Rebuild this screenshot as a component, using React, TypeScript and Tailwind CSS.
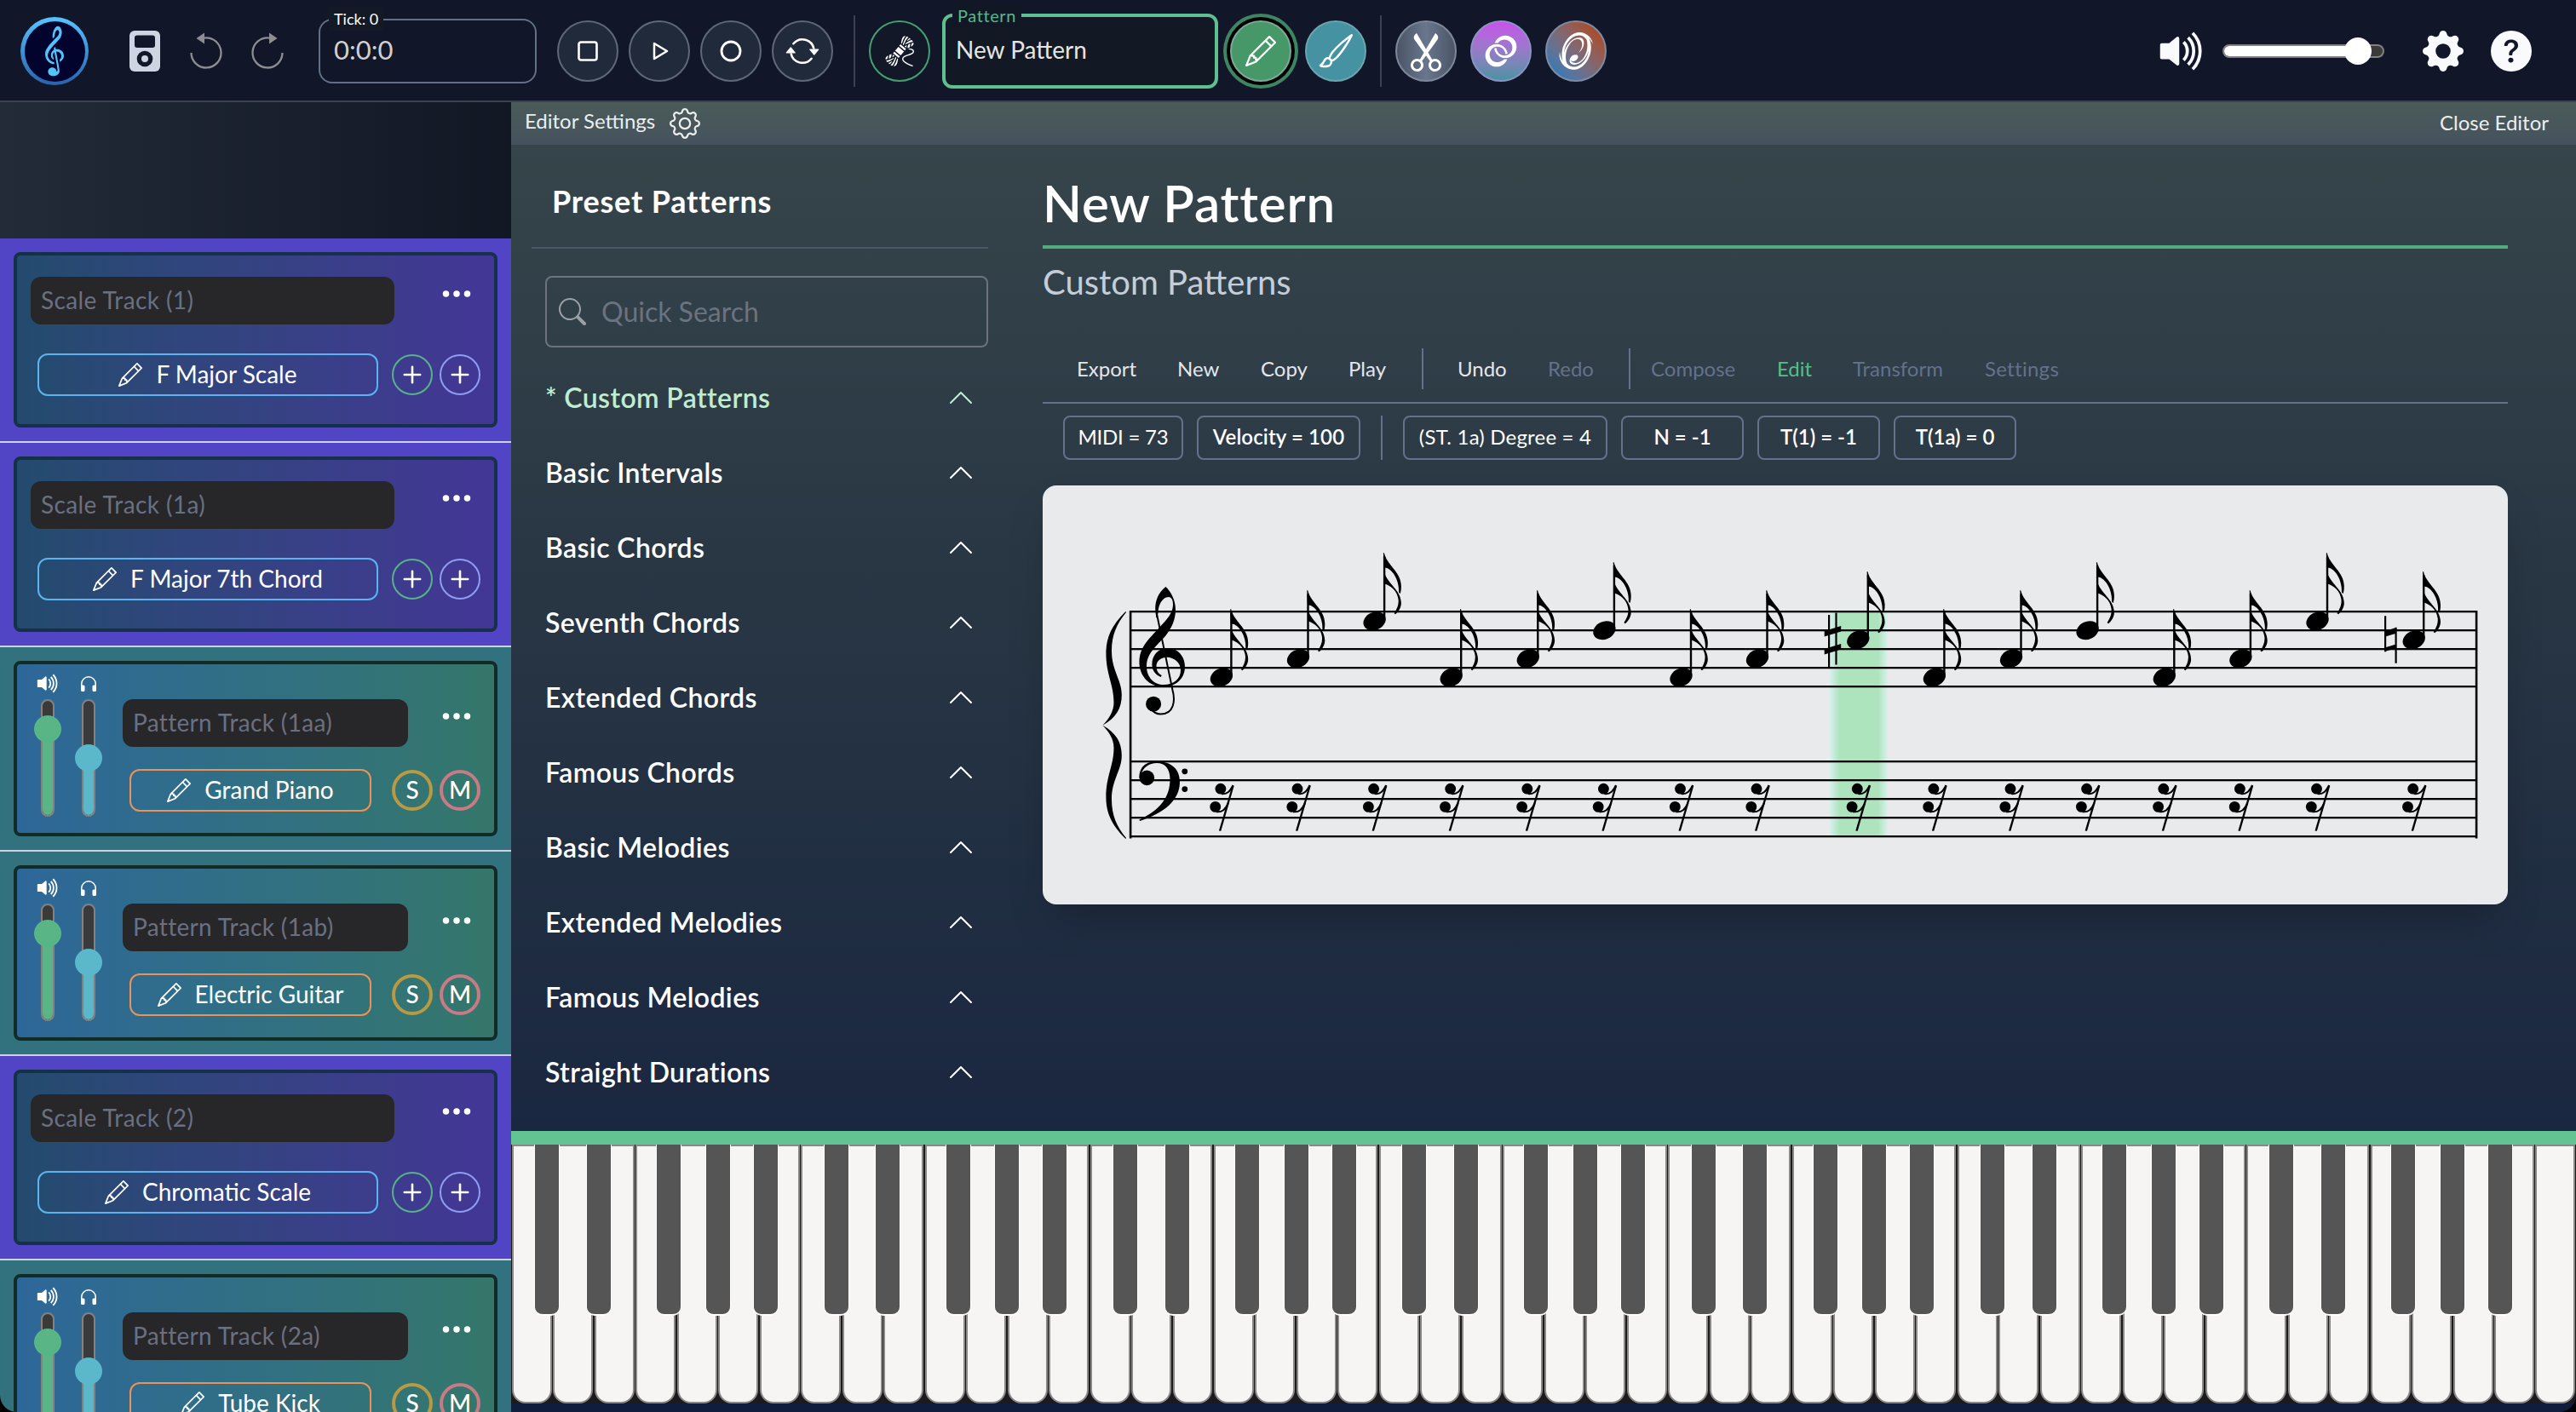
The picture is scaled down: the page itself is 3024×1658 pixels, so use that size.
import type { ReactNode } from "react";
import {
  BsArrowRepeat,
  BsBrush,
  BsChevronUp,
  BsGear,
  BsGearFill,
  BsHeadphones,
  BsPencil,
  BsPlus,
  BsQuestionCircleFill,
  BsScissors,
  BsSearch,
  BsThreeDots,
  BsVolumeUpFill,
} from "react-icons/bs";
import { GiGClef, GiLinkedRings, GiPortal, GiYarn } from "react-icons/gi";

/* ---------- Navigation bar ---------- */

function RoundButton({ className = "", children }: { className?: string; children: ReactNode }) {
  return (
    <button className={`flex size-[72px] shrink-0 items-center justify-center rounded-full border-2 text-white ${className}`}>
      {children}
    </button>
  );
}

function TransportButtons() {
  return (
    <div className="ml-6 flex gap-3">
      <RoundButton className="border-[#5f6878] bg-[#212a3a]">
        <svg className="size-6" viewBox="0 0 24 24" fill="none" stroke="currentColor" strokeWidth="2.6">
          <rect x="1.5" y="1.5" width="21" height="21" rx="2.5" />
        </svg>
      </RoundButton>
      <RoundButton className="border-[#5f6878] bg-[#212a3a]">
        <svg className="ml-1 size-6" viewBox="0 0 24 24" fill="none" stroke="currentColor" strokeWidth="2.5" strokeLinejoin="round">
          <path d="M4 3 L19 12 L4 21 Z" />
        </svg>
      </RoundButton>
      <RoundButton className="border-[#5f6878] bg-[#212a3a]">
        <svg className="size-[26px]" viewBox="0 0 26 26" fill="none" stroke="currentColor" strokeWidth="2.8">
          <circle cx="13" cy="13" r="11" />
        </svg>
      </RoundButton>
      <RoundButton className="border-[#5f6878] bg-[#212a3a]">
        <BsArrowRepeat className="size-10" />
      </RoundButton>
    </div>
  );
}

function UndoIcon({ className = "" }: { className?: string }) {
  return (
    <svg className={`h-[46px] w-10 shrink-0 text-[#8d8d92] ${className}`} viewBox="0 0 40 46" fill="none">
      <path d="M2.5 25 A17.5 17.5 0 1 0 18 7.6" stroke="currentColor" strokeWidth="2.3" />
      <path d="M8.5 8 L18 1.5 V14.5 Z" fill="currentColor" />
    </svg>
  );
}

function NavBar() {
  return (
    <header className="flex h-[120px] shrink-0 items-center border-b-2 border-[#3d4253] bg-[#111628] pl-6 pr-[52px] pt-0.5">
      <div className="flex size-20 shrink-0 items-center justify-center rounded-full bg-linear-to-b from-[#57c4ff] to-[#2a62ac]">
        <div className="flex size-[71px] items-center justify-center rounded-full bg-[#02042d] text-[#52c3fc]">
          <GiGClef className="size-[64px]" />
        </div>
      </div>
      <svg className="ml-12 h-12 w-9 shrink-0" viewBox="0 0 36 48">
        <rect width="36" height="48" rx="6" fill="#ced4e1" />
        <rect x="6" y="5.5" width="24" height="14.5" rx="3" fill="#111628" />
        <circle cx="18" cy="33" r="9.3" fill="#111628" />
        <circle cx="18" cy="33" r="4" fill="#ced4e1" />
      </svg>
      <UndoIcon className="ml-[34px]" />
      <UndoIcon className="ml-8 -scale-x-100" />
      <fieldset className="relative ml-10 flex h-[76px] w-64 shrink-0 items-center rounded-2xl border-2 border-[#627087] pl-4">
        <span className="absolute -top-4 left-2.5 bg-[#141926] px-1.5 text-[18px] leading-7 text-white">Tick: 0</span>
        <span className="-mt-1 text-[31px] leading-none text-[#d0d0d0]">0:0:0</span>
      </fieldset>
      <TransportButtons />
      <div className="ml-6 h-[84px] w-0.5 shrink-0 bg-[#3a4156]" />
      <RoundButton className="ml-4 border-[#43a070] bg-[#131829]">
        <GiYarn className="size-10" />
      </RoundButton>
      <fieldset className="relative ml-3.5 flex h-[88px] w-[324px] shrink-0 items-center rounded-xl border-4 border-[#5fbf90] bg-[#131924] pl-3">
        <span className="absolute -top-4 left-2 bg-[#121726] px-1.5 text-[20px] leading-7 tracking-[0.03em] text-[#57b98a]">Pattern</span>
        <span className="-mt-1 text-[28px] leading-none text-[#e5e5e5]">New Pattern</span>
      </fieldset>
      <RoundButton className="ml-[14px] border-[#7fa799] bg-[#479869] shadow-[0_0_0_4px_#000,0_0_0_8px_#3f8463]">
        <BsPencil className="size-9" />
      </RoundButton>
      <RoundButton className="ml-4 border-[#6ba6b0] bg-[#4593a2]">
        <BsBrush className="size-10" />
      </RoundButton>
      <div className="ml-4 h-[84px] w-0.5 shrink-0 bg-[#3a4156]" />
      <RoundButton className="ml-4 border-[#7f889a] bg-linear-to-r from-[#4b5567] via-[#69768d] to-[#4b5567]">
        <BsScissors className="size-12" />
      </RoundButton>
      <RoundButton className="ml-4 border-[#8b93c6] bg-linear-to-b from-[#c850ec] to-[#4593a2]">
        <GiLinkedRings className="size-10" />
      </RoundButton>
      <RoundButton className="ml-4 border-[#7d8ba3] bg-linear-to-tr from-[#3a79b3] from-15% to-[#a84c28] to-85%">
        <GiPortal className="size-12" />
      </RoundButton>
      <BsVolumeUpFill className="ml-auto size-[60px] shrink-0 text-[#f8fafc]" />
      <div className="relative ml-[17px] h-4 w-[190px] shrink-0 rounded-full border-2 border-[#84807d] bg-[#3a3a3a]">
        <div className="h-full w-[158px] rounded-full bg-white" />
        <div className="absolute -top-2.5 left-[141px] size-8 rounded-full bg-white" />
      </div>
      <BsGearFill className="ml-[45px] size-12 shrink-0 text-[#f8fafc]" />
      <BsQuestionCircleFill className="ml-8 size-12 shrink-0 text-[#f8fafc]" />
    </header>
  );
}

/* ---------- Track list ---------- */

function ScaleTrack({ label, scale }: { label: string; scale: string }) {
  return (
    <div className="h-[240px] shrink-0 border-b-2 border-[#ced2e2] bg-[#5144c5] p-4">
      <div className="h-[206px] rounded-lg border-4 border-[#17304a] bg-linear-to-r from-[#234b6e] to-[#433696] pl-4 pt-[25px]">
        <div className="flex">
          <div className="flex h-14 w-[427px] items-center rounded-xl bg-[#27272a] pl-3 text-[28px] tracking-[0.014em] text-[#6b7080]">
            <span className="-mt-0.5">{label}</span>
          </div>
          <BsThreeDots className="ml-[53px] size-10 text-white" />
        </div>
        <div className="mt-[34px] flex items-center pl-2">
          <div className="flex h-[50px] w-[400px] items-center justify-center gap-4 rounded-xl border-2 border-[#5bb4f0] text-[28px] text-white">
            <BsPencil className="size-7" />
            <span className="-mt-0.5">{scale}</span>
          </div>
          <div className="ml-4 flex size-12 items-center justify-center rounded-full border-2 border-[#56b488] text-white">
            <BsPlus className="size-[42px]" />
          </div>
          <div className="ml-2 flex size-12 items-center justify-center rounded-full border-2 border-[#8f9df2] text-white">
            <BsPlus className="size-[42px]" />
          </div>
        </div>
      </div>
    </div>
  );
}

function GreenSlider() {
  return (
    <div className="relative mt-2 h-[138px] w-4 rounded-full border-2 border-[#86817e] bg-[#3a3a3a]">
      <div className="absolute inset-x-0 bottom-0 h-[102px] rounded-b-full bg-[#59b586]" />
      <div className="absolute -left-2.5 top-[17px] size-8 rounded-full bg-[#59b586]" />
    </div>
  );
}

function BlueSlider() {
  return (
    <div className="relative mt-2 h-[138px] w-4 rounded-full border-2 border-[#86817e] bg-[#3a3a3a]">
      <div className="absolute inset-x-0 bottom-0 h-[68px] rounded-b-full bg-[#5ab8ca]" />
      <div className="absolute -left-2.5 top-[51px] size-8 rounded-full bg-[#5ab8ca]" />
    </div>
  );
}

function PatternTrack({ label, instrument }: { label: string; instrument: string }) {
  return (
    <div className="h-[240px] shrink-0 border-b-2 border-[#ced2e2] bg-[#32727f] p-4">
      <div className="flex h-[206px] rounded-lg border-4 border-[#122c25] bg-linear-to-r from-[#2d6799] via-[#32717f] via-60% to-[#34776a] pl-5 pt-2">
        <div className="flex w-8 flex-col items-center text-white">
          <BsVolumeUpFill className="h-[29px] w-[29px]" />
          <div className="-mt-1">
            <GreenSlider />
          </div>
        </div>
        <div className="ml-4 flex w-8 flex-col items-center text-white">
          <BsHeadphones className="mt-[3px] h-[24px] w-[24px]" />
          <div className="-mt-0.5">
            <BlueSlider />
          </div>
        </div>
        <div className="ml-6 pt-[33px]">
          <div className="flex">
            <div className="flex h-14 w-[335px] items-center rounded-xl bg-[#27272a] pl-3 text-[28px] tracking-[0.012em] text-[#6b7080]">
              <span className="-mt-0.5">{label}</span>
            </div>
            <BsThreeDots className="ml-[37px] size-10 text-white" />
          </div>
          <div className="mt-[26px] flex items-center pl-2">
            <div className="flex h-[50px] w-[284px] items-center justify-center gap-4 rounded-xl border-2 border-[#eb9356] text-[28px] text-white">
              <BsPencil className="size-7" />
              <span className="-mt-0.5">{instrument}</span>
            </div>
            <div className="ml-6 flex size-12 items-center justify-center rounded-full border-4 border-[#b89a45] text-[28px] font-medium leading-none text-white">
              <span className="-mt-0.5">S</span>
            </div>
            <div className="ml-2 flex size-12 items-center justify-center rounded-full border-4 border-[#c87a85] text-[28px] font-medium leading-none text-white">
              <span className="-mt-0.5">M</span>
            </div>
          </div>
        </div>
      </div>
    </div>
  );
}

function TrackList() {
  return (
    <aside className="flex w-[600px] shrink-0 flex-col overflow-hidden">
      <div className="h-40 shrink-0 bg-linear-to-r from-[#232b38] to-[#121724]" />
      <ScaleTrack label="Scale Track (1)" scale="F Major Scale" />
      <ScaleTrack label="Scale Track (1a)" scale="F Major 7th Chord" />
      <PatternTrack label="Pattern Track (1aa)" instrument="Grand Piano" />
      <PatternTrack label="Pattern Track (1ab)" instrument="Electric Guitar" />
      <ScaleTrack label="Scale Track (2)" scale="Chromatic Scale" />
      <PatternTrack label="Pattern Track (2a)" instrument="Tube Kick" />
    </aside>
  );
}

/* ---------- Preset sidebar ---------- */

const presetGroups = [
  "Basic Intervals",
  "Basic Chords",
  "Seventh Chords",
  "Extended Chords",
  "Famous Chords",
  "Basic Melodies",
  "Extended Melodies",
  "Famous Melodies",
  "Straight Durations",
];

function PresetSidebar() {
  return (
    <div className="w-[536px] shrink-0 pt-[43px]">
      <h2 className="pl-6 text-[36px] font-bold leading-[46px] tracking-[0.022em] text-white">Preset Patterns</h2>
      <div className="mt-[31px] h-0.5 bg-[#49596a]" />
      <div className="ml-4 mt-8 flex h-[84px] items-center rounded-lg border-2 border-[#6b7280] pl-3.5">
        <BsSearch className="size-8 text-[#9aa0a6]" />
        <span className="ml-[18px] text-[32px] leading-none text-[#6b7280]">Quick Search</span>
      </div>
      <ul className="ml-4 mt-[15px] text-[32px] font-semibold tracking-[0.012em] text-white">
        <li className="flex h-[88px] items-center justify-between pr-4 text-[#c0ecd2]">
          * Custom Patterns
          <BsChevronUp className="size-8" />
        </li>
        {presetGroups.map((name) => (
          <li key={name} className="flex h-[88px] items-center justify-between pr-4">
            {name}
            <BsChevronUp className="size-8" />
          </li>
        ))}
      </ul>
    </div>
  );
}

/* ---------- Score ---------- */

const columns = [
  { x: 209.9, y: 225.3 },
  { x: 300, y: 203.3 },
  { x: 389.6, y: 159.3 },
  { x: 479.7, y: 225.3 },
  { x: 569.8, y: 203.3 },
  { x: 659.4, y: 170.2 },
  { x: 749.5, y: 225.3 },
  { x: 839, y: 203.3 },
  { x: 957.3, y: 181.3 },
  { x: 1046.9, y: 225.3 },
  { x: 1137, y: 203.3 },
  { x: 1226.6, y: 170.2 },
  { x: 1316.8, y: 225.3 },
  { x: 1406.4, y: 203.3 },
  { x: 1496.5, y: 159.3 },
  { x: 1609.7, y: 181.3 },
];

const trebleLines = [148, 170, 192, 214, 236];
const bassLines = [324, 346, 368, 390, 412];

function SixteenthNote({ x, y }: { x: number; y: number }) {
  return (
    <g transform={`translate(${x} ${y})`}>
      <ellipse rx="13.6" ry="10.4" transform="rotate(-24)" />
      <path d="M10.3 -76 H12.7 V-2 H10.3 Z" />
      <g transform="translate(11 -80)">
        <path d="M-0.7 0 L0.3 0 C3 14 20.3 22 20.3 39 C20.3 43 20 45.5 19 48 L17.4 46 C18.5 36 12 18 0 17 Z" />
        <path d="M0 21 C3 36 20.3 43 20.3 59 C20.3 65 16 70 13.6 72 L12 71 C15 66 17.6 61 17 55 C16 45 8 38 0 36 Z" />
      </g>
    </g>
  );
}

function SixteenthRest({ x }: { x: number }) {
  return (
    <g transform={`translate(${x} 352)`}>
      <circle cx="-1" cy="4.2" r="6.4" />
      <circle cx="-7.2" cy="25.4" r="6.4" />
      <path d="M0 10 C7 11 10 7 13.6 0 M-6 31.2 C1 32 4.5 28.5 8 21" fill="none" stroke="black" strokeWidth="2" />
      <path d="M12.7 0 L14.8 0.8 L-0.6 53.8 L-3 53.4 Z" />
    </g>
  );
}

function Score() {
  return (
    <svg className="mt-[30px] h-[492px] w-[1720px] rounded-2xl bg-[#e9eaec] shadow-2xl" viewBox="0 0 1720 492">
      <defs>
        <linearGradient id="cursor" x1="0" x2="1" y1="0" y2="0">
          <stop offset="0" stopColor="#d8f0ee" />
          <stop offset="0.17" stopColor="#ade4be" />
          <stop offset="0.83" stopColor="#ade4be" />
          <stop offset="1" stopColor="#d8f0ee" />
        </linearGradient>
      </defs>
      <rect x="924" y="148" width="68" height="264" fill="url(#cursor)" />
      {[...trebleLines, ...bassLines].map((y) => (
        <rect key={y} x="102" y={y - 1} width="1582" height="2.3" />
      ))}
      <rect x="101.8" y="147" width="2.6" height="267.5" />
      <rect x="1681.8" y="147" width="2.6" height="267.5" />

      {/* brace */}
      <path d="M97.4 148 C80 165 74.4 180 74.4 197 C74.4 222 83.5 234 83.5 255 C83.5 265 78 274 70.4 281.7 C86 273 92.8 262 92.8 246 C92.8 228 81 218 81 194 C81 176 87 162 98 149 Z" />
      <path d="M97.4 415 C80 398 74.4 383 74.4 366 C74.4 341 83.5 329 83.5 308 C83.5 298 78 289.4 70.4 281.7 C86 290.4 92.8 301.4 92.8 317 C92.8 335 81 345 81 369 C81 387 87 401 98 414 Z" />

      {/* treble clef */}
      <path d="M144.4 119 C150 124 156 134 156 146 C156 158 151 168 144 177 C134 188 122 197 122 212 C122 226 131 234 142 234 C154 234 162 227 162 217 C162 208 154 201.7 146 201.7 C138 201.7 133.5 207 133.5 212 C133.5 218 136 221 139.8 223 L138.7 225 C132 222 128.4 217 128.4 210 C128.4 199 136 191 146.5 191 C159 191 167 201 167 213 C167 227 156 236.5 142 236.5 C125 236.5 113.4 224 113.4 207 C113.4 190 125 180 136 168 C146 157 153 150 153 140 C153 134 151 131 147.5 131 C141 131 135.5 140 135.5 150 L133.6 156 C130.5 143 132 129 144.4 119 Z" />
      <path d="M133.8 150 L152.4 240 C156 253 154 268.5 138.5 268.5 C134 268.5 129 266 127 262" fill="none" stroke="black" strokeWidth="2" />
      <circle cx="130.1" cy="256.7" r="9" />

      {/* bass clef */}
      <path d="M113.4 392.6 C138 381 149.5 366 149.5 345 C149.5 333 144 326 134 326 C125 326 117.5 331 115.5 340 L113.4 344 C113 330 122 324 134 324 C151 324 161 333 161 348 C161 370 142 385 114 394 Z" />
      <circle cx="122.4" cy="343.4" r="8.8" />
      <circle cx="166.8" cy="335.8" r="3.4" />
      <circle cx="166.8" cy="356.6" r="3.4" />

      {columns.map((c) => (
        <SixteenthNote key={c.x} x={c.x} y={c.y} />
      ))}
      {columns.map((c) => (
        <SixteenthRest key={c.x} x={c.x} />
      ))}

      {/* sharp */}
      <path d="M922 152 h2.2 v61 h-2.2 Z M930.4 149.5 h2.2 v61 h-2.2 Z M917.7 171 L937.2 165 V171.5 L917.7 177.5 Z M917.7 192 L937.2 186 V192.5 L917.7 198.5 Z" />
      {/* natural */}
      <path d="M1575 153.3 h2.2 v42 h-2.2 Z M1587.5 166.7 h2.2 v42 h-2.2 Z M1575.5 171 L1589.5 166.7 V173.5 L1575.5 177.8 Z M1575.5 190.5 L1589.5 186.2 V190.8 L1575.5 195 Z" />
    </svg>
  );
}

/* ---------- Editor content ---------- */

function Chip({ className, children }: { className: string; children: ReactNode }) {
  return (
    <div className={`flex h-[52px] items-center justify-center whitespace-nowrap rounded-lg border-2 border-[#64718a] text-[24px] text-white ${className}`}>
      <span className="-mt-0.5">{children}</span>
    </div>
  );
}

function EditorContent() {
  return (
    <div className="w-[1720px] pt-11">
      <h1 className="h-[78px] border-b-4 border-[#51ab7d] text-[60px] font-semibold leading-[48px] tracking-[0.014em] text-white">New Pattern</h1>
      <h3 className="mt-[18px] text-[40px] leading-[42px] text-[#c5ced8]">Custom Patterns</h3>
      <nav className="mt-[57px] flex h-12 items-center pl-10 text-[24px] leading-none text-[#e4e7ea]">
        <span className="w-[118px]">Export</span>
        <span className="w-[98px]">New</span>
        <span className="w-[103px]">Copy</span>
        <span className="w-[86px]">Play</span>
        <span className="h-12 w-0.5 bg-[#64718a]" />
        <span className="ml-10 w-[106px]">Undo</span>
        <span className="w-[95px] text-[#64718a]">Redo</span>
        <span className="h-12 w-0.5 bg-[#64718a]" />
        <span className="ml-6 w-[148px] text-[#64718a]">Compose</span>
        <span className="w-[89px] text-[#56bd86]">Edit</span>
        <span className="w-[155px] text-[#64718a]">Transform</span>
        <span className="tracking-[0.012em] text-[#64718a]">Settings</span>
      </nav>
      <div className="mt-[15px] h-0.5 bg-[#64718a]" />
      <div className="mt-3.5 flex pl-6">
        <Chip className="w-[141px] tracking-[-0.01em]">MIDI = 73</Chip>
        <Chip className="ml-4 w-[192px] font-semibold tracking-[0.005em]">Velocity = 100</Chip>
        <div className="ml-6 h-[52px] w-0.5 bg-[#64718a]" />
        <Chip className="ml-6 w-[240px] tracking-[0.008em]">(ST. 1a) Degree = 4</Chip>
        <Chip className="ml-4 w-36 font-semibold">N = -1</Chip>
        <Chip className="ml-4 w-36 font-semibold">T(1) = -1</Chip>
        <Chip className="ml-4 w-36 font-semibold">T(1a) = 0</Chip>
      </div>
      <Score />
    </div>
  );
}

/* ---------- Piano ---------- */

const WHITE_KEYS = 50;
const KEY_WIDTH = 2424 / WHITE_KEYS;
const OCTAVE_WIDTH = KEY_WIDTH * 7;
const blackOffsets = [42.2, 102.8, 185.2, 243, 299];
const blackKeys = Array.from({ length: 7 }, (_, octave) => blackOffsets.map((o) => octave * OCTAVE_WIDTH + o - 15)).flat();

function Piano() {
  return (
    <div className="shrink-0 border-t-[16px] border-[#62c393] bg-[#101d3d] pb-2.5">
      <div className="relative flex h-[304px] bg-[#1b1b1d]">
        {Array.from({ length: WHITE_KEYS }, (_, i) => (
          <div key={i} className="flex-1 px-[0.75px]">
            <div className="h-full rounded-b-[16px] border-2 border-[#8a8886] bg-[#f6f5f3]" />
          </div>
        ))}
        {blackKeys.map((left) => (
          <div key={left} className="absolute top-0 h-[201px] w-[30px] rounded-b-[10px] border-x border-b-2 border-white bg-[#555]" style={{ left }} />
        ))}
      </div>
    </div>
  );
}

export default function App() {
  return (
    <div className="h-[1658px] w-[3024px] bg-black font-['Lato',sans-serif]">
      <div className="flex h-full flex-col overflow-hidden rounded-b-[20px]">
        <NavBar />
        <div className="flex min-h-0 flex-1">
          <TrackList />
          <main className="flex min-w-0 flex-1 flex-col">
            <div className="flex h-[50px] shrink-0 items-center bg-linear-to-b from-[#4b5b58] to-[#45525e] pl-4 pr-8 text-[24px] leading-none text-[#eceeee]">
              <span className="-mt-1.5">Editor Settings</span>
              <BsGear className="ml-[17px] size-9" />
              <span className="ml-auto -mt-0.5">Close Editor</span>
            </div>
            <div className="flex min-h-0 flex-1 gap-16 overflow-hidden bg-linear-to-b from-[#36454a] via-[#283644] via-45% to-[#1a2740] pl-6">
              <PresetSidebar />
              <EditorContent />
            </div>
            <Piano />
          </main>
        </div>
      </div>
    </div>
  );
}
